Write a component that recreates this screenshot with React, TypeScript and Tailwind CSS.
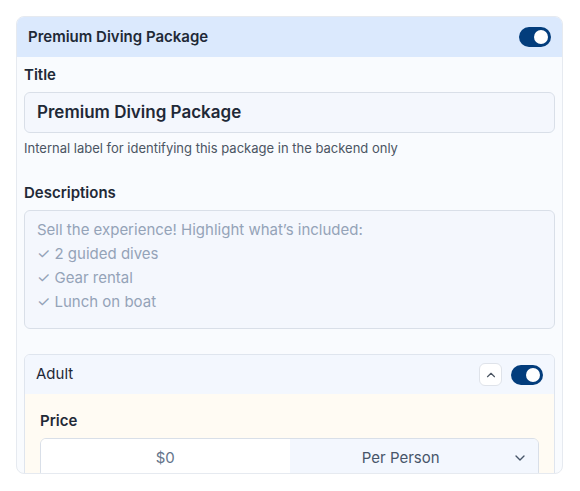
import { ChevronDown, ChevronUp } from "lucide-react";

function Toggle() {
  return (
    <div className="flex h-5 w-8 items-center justify-end rounded-full bg-[#033d7c] px-[3px]">
      <div className="h-[14px] w-[14px] rounded-full bg-white" />
    </div>
  );
}

export default function App() {
  return (
    <div className="p-4 font-['Inter',sans-serif]">
      <div className="h-[458px] w-[547px] overflow-hidden rounded-lg border border-[#e6eaf0] bg-[#f9fbfe]">
        <div className="flex h-10 items-center justify-between bg-[#dbe9fd] pl-[11px] pr-[11px]">
          <span className="text-[15px] font-semibold text-[#1f2937]">Premium Diving Package</span>
          <Toggle />
        </div>

        <div className="px-[7px] pt-[7px]">
          <label className="block text-[15px] font-semibold leading-[22px] text-[#1f2937]">Title</label>
          <div className="mt-1.5 flex h-[41px] items-center rounded-md border border-[#d9dfe8] bg-[#f4f7fd] px-3">
            <span className="text-[17px] font-semibold text-[#1f2937]">Premium Diving Package</span>
          </div>
          <p className="mt-[6px] text-[13px] leading-[18px] text-[#4b5563]">
            Internal label for identifying this package in the backend only
          </p>

          <label className="mt-[25px] block text-[15px] font-semibold leading-[22px] text-[#1f2937]">
            Descriptions
          </label>
          <div className="mt-1.5 h-[119px] rounded-md border border-[#d9dfe8] bg-[#f4f7fd] px-3 pt-[7px] text-[15px] leading-6 text-[#94a3b8]">
            <div>Sell the experience! Highlight what’s included:</div>
            <div>✓ 2 guided dives</div>
            <div>✓ Gear rental</div>
            <div>✓ Lunch on boat</div>
          </div>

          <div className="mt-[25px] overflow-hidden rounded-md border border-[#dfe5ee]">
            <div className="flex h-[39px] items-center justify-between bg-[#f3f7fe] px-[11px]">
              <span className="text-[15px] text-[#1f2937]">Adult</span>
              <div className="flex items-center gap-[9px]">
                <div className="flex h-[23px] w-[23px] items-center justify-center rounded-md border border-[#dfe3ea] bg-white">
                  <ChevronUp size={14} strokeWidth={2} className="text-[#4b5563]" />
                </div>
                <Toggle />
              </div>
            </div>
            <div className="bg-[#fffbf3] px-[15px] pb-4 pt-4">
              <label className="block text-[15px] font-semibold leading-[22px] text-[#1f2937]">Price</label>
              <div className="mt-1.5 flex h-10 overflow-hidden rounded-md border border-[#d9dfe8]">
                <div className="flex w-1/2 items-center justify-center bg-white text-[15px] text-[#64748b]">$0</div>
                <div className="flex w-1/2 items-center bg-[#f3f7fe] pr-[10px] text-[15px] text-[#475569]">
                  <span className="flex-1 text-center">Per Person</span>
                  <ChevronDown size={16} strokeWidth={2} className="text-[#475569]" />
                </div>
              </div>
            </div>
          </div>
        </div>
      </div>
    </div>
  );
}
